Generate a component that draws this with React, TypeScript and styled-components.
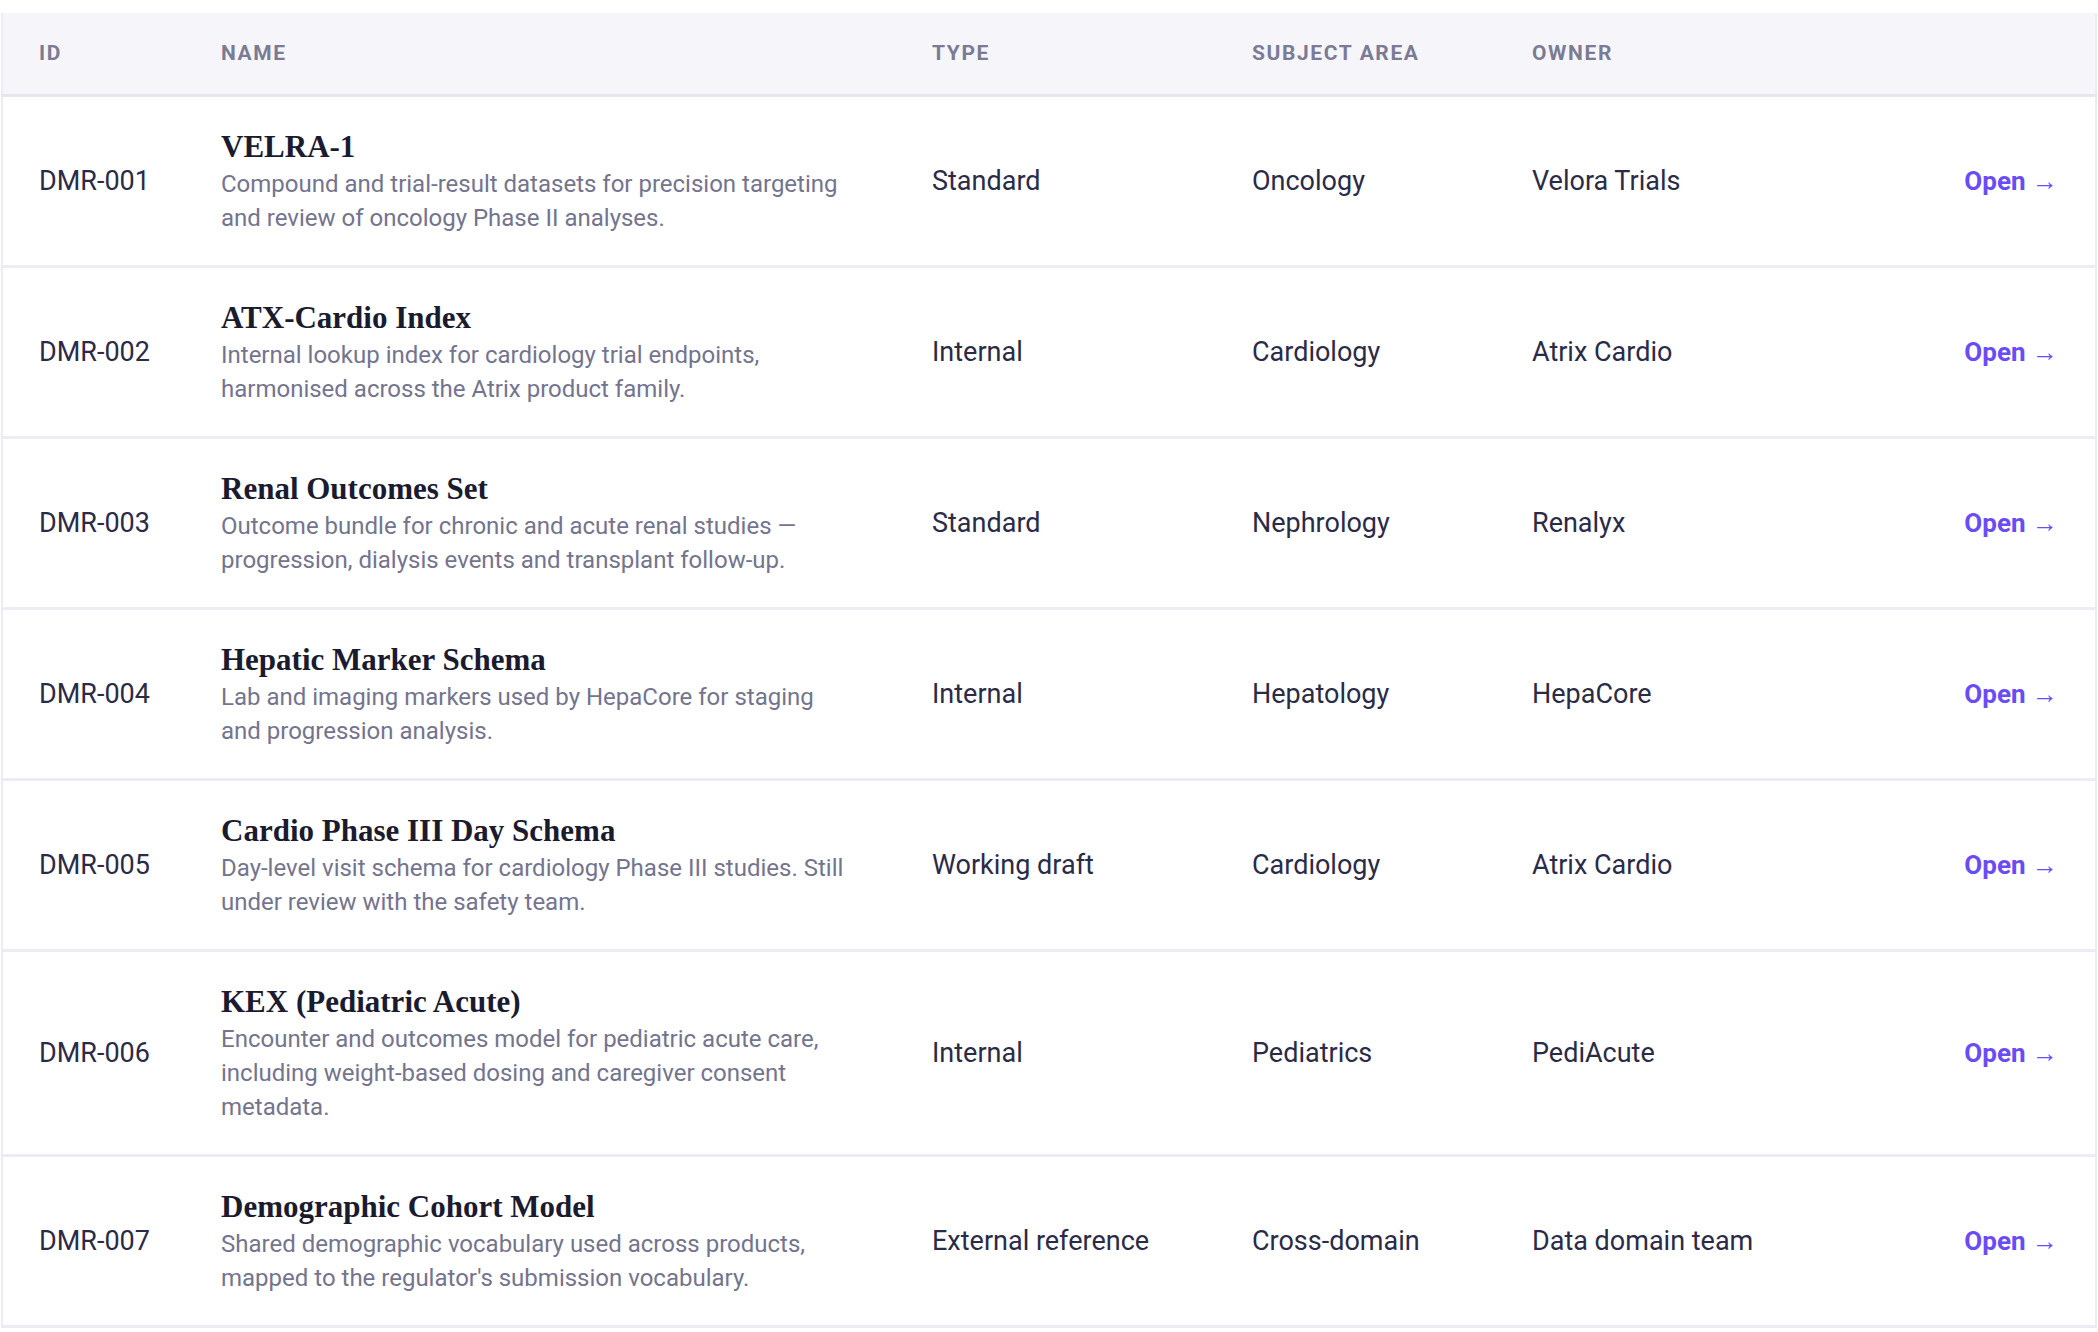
import { createGlobalStyle } from 'styled-components';
import styled from 'styled-components';

const GlobalStyle = createGlobalStyle`
  body {
    margin: 0;
    background: #fff;
    font-family: Roboto, 'Liberation Sans', sans-serif;
  }
  th, td {
    box-sizing: border-box;
  }
`;

const Wrap = styled.div`
  padding: 13px 1px 0 1px;
`;

const Table = styled.table`
  width: 100%;
  border-collapse: collapse;
  table-layout: fixed;
  border-left: 2px solid #ececf4;
  border-right: 2px solid #ececf4;
`;

const HeadRow = styled.tr`
  background: #f6f6fa;
  border-bottom: 3px solid #e6e6f0;
`;

const Th = styled.th<{ $w?: number }>`
  ${(p) => (p.$w ? `width: ${p.$w}px;` : '')}
  height: 82px;
  padding: 0 0 0 36px;
  text-align: left;
  font-size: 21px;
  font-weight: 700;
  letter-spacing: 1.6px;
  color: #7b7b95;
  text-transform: uppercase;
`;

const Row = styled.tr`
  border-bottom: 3px solid #ececf4;
`;

const Td = styled.td<{ $right?: boolean }>`
  padding: 30px ${(p) => (p.$right ? '37px' : '0')} 30px 36px;
  font-size: 27px;
  color: #2b2b47;
  vertical-align: middle;
  text-align: ${(p) => (p.$right ? 'right' : 'left')};
`;

const Title = styled.div`
  font-family: 'Liberation Serif', 'DejaVu Serif', serif;
  font-weight: 700;
  font-size: 31px;
  line-height: 40px;
  color: #1b1b30;
`;

const Desc = styled.div`
  font-size: 24px;
  line-height: 34px;
  color: #74748e;
  padding-right: 44px;
`;

const OpenLink = styled.a`
  color: #6a4cf5;
  font-weight: 700;
  font-size: 26px;
  text-decoration: none;
  white-space: nowrap;
`;

const rows = [
  ['DMR-001', 'VELRA-1', 'Compound and trial-result datasets for precision targeting and review of oncology Phase II analyses.', 'Standard', 'Oncology', 'Velora Trials'],
  ['DMR-002', 'ATX-Cardio Index', 'Internal lookup index for cardiology trial endpoints, harmonised across the Atrix product family.', 'Internal', 'Cardiology', 'Atrix Cardio'],
  ['DMR-003', 'Renal Outcomes Set', 'Outcome bundle for chronic and acute renal studies — progression, dialysis events and transplant follow-up.', 'Standard', 'Nephrology', 'Renalyx'],
  ['DMR-004', 'Hepatic Marker Schema', 'Lab and imaging markers used by HepaCore for staging and progression analysis.', 'Internal', 'Hepatology', 'HepaCore'],
  ['DMR-005', 'Cardio Phase III Day Schema', 'Day-level visit schema for cardiology Phase III studies. Still under review with the safety team.', 'Working draft', 'Cardiology', 'Atrix Cardio'],
  ['DMR-006', 'KEX (Pediatric Acute)', 'Encounter and outcomes model for pediatric acute care, including weight-based dosing and caregiver consent metadata.', 'Internal', 'Pediatrics', 'PediAcute'],
  ['DMR-007', 'Demographic Cohort Model', "Shared demographic vocabulary used across products, mapped to the regulator's submission vocabulary.", 'External reference', 'Cross-domain', 'Data domain team'],
];

const App = () => {
  return (
    <Wrap>
      <GlobalStyle />
      <Table>
        <thead>
          <HeadRow>
            <Th $w={183}>ID</Th>
            <Th $w={711}>Name</Th>
            <Th $w={320}>Type</Th>
            <Th $w={280}>Subject area</Th>
            <Th $w={340}>Owner</Th>
            <Th></Th>
          </HeadRow>
        </thead>
        <tbody>
          {rows.map((r) => (
            <Row key={r[0]}>
              <Td>{r[0]}</Td>
              <Td>
                <Title>{r[1]}</Title>
                <Desc>{r[2]}</Desc>
              </Td>
              <Td>{r[3]}</Td>
              <Td>{r[4]}</Td>
              <Td>{r[5]}</Td>
              <Td $right>
                <OpenLink href='#'>Open →</OpenLink>
              </Td>
            </Row>
          ))}
        </tbody>
      </Table>
    </Wrap>
  );
};

export default App;
